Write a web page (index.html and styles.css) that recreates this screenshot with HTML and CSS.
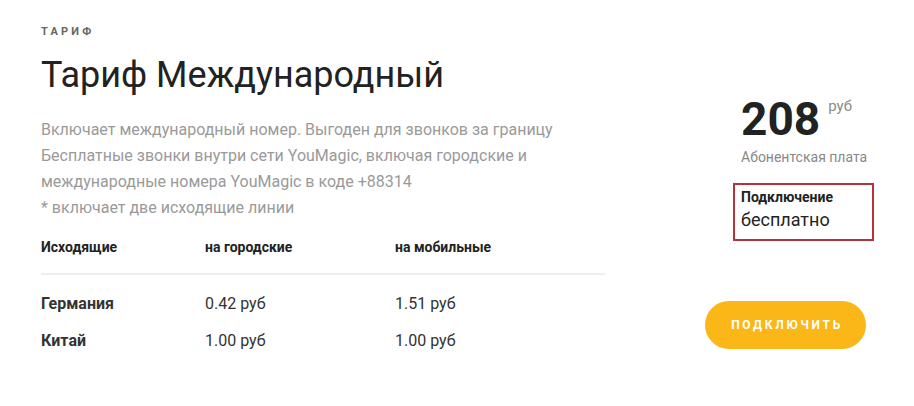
FILE: index.html
```html
<!DOCTYPE html>
<html lang="ru">
<head>
<meta charset="utf-8">
<title>Тариф Международный</title>
<link rel="stylesheet" href="styles.css">
</head>
<body>
<div class="page">
  <div class="main">
    <div class="label">ТАРИФ</div>
    <h1 class="title">Тариф Международный</h1>
    <div class="desc">
      <p>Включает международный номер. Выгоден для звонков за границу</p>
      <p>Бесплатные звонки внутри сети YouMagic, включая городские и</p>
      <p>международные номера YouMagic в коде +88314</p>
      <p>* включает две исходящие линии</p>
    </div>
    <div class="table">
      <div class="row head">
        <div class="c1">Исходящие</div>
        <div class="c2">на городские</div>
        <div class="c3">на мобильные</div>
      </div>
      <div class="body">
        <div class="row">
          <div class="c1 country">Германия</div>
          <div class="c2">0.42 руб</div>
          <div class="c3">1.51 руб</div>
        </div>
        <div class="row">
          <div class="c1 country">Китай</div>
          <div class="c2">1.00 руб</div>
          <div class="c3">1.00 руб</div>
        </div>
      </div>
    </div>
  </div>
  <div class="side">
    <div class="price">
      <span class="amount">208</span>
      <span class="cur">руб</span>
    </div>
    <div class="fee">Абонентская плата</div>
    <div class="connect">
      <div class="connect-label">Подключение</div>
      <div class="connect-value">бесплатно</div>
    </div>
    <button class="btn">ПОДКЛЮЧИТЬ</button>
  </div>
</div>
</body>
</html>
```

FILE: styles.css
```css
* { box-sizing: border-box; }
html, body { margin: 0; padding: 0; background: #fff; }
body { font-family: Roboto, "Liberation Sans", sans-serif; color: #333; }

.page {
  display: flex;
  padding: 24px 0 0 41px;
}
.main { width: 564px; }

.label {
  font-size: 11px;
  line-height: 13px;
  font-weight: 700;
  letter-spacing: 3.2px;
  color: #666;
  padding-top: 0.5px;
}
.title {
  margin: 16px 0 0;
  font-size: 36px;
  line-height: 42px;
  font-weight: 400;
  color: #222;
}
.desc { margin-top: 21.5px; color: #9a9a9a; font-size: 16px; line-height: 26px; }
.desc p { margin: 0; }

.table { margin-top: 16px; }
.row { display: flex; }
.c1 { width: 164px; }
.c2 { width: 190px; }
.c3 { flex: 1; }
.head {
  font-size: 14px;
  line-height: 20px;
  font-weight: 700;
  color: #222;
  padding-bottom: 16px;
  border-bottom: 2px solid #eeeeee;
}
.body { padding-top: 9.5px; }
.body .row { font-size: 16px; line-height: 37px; color: #333; }
.country { font-weight: 700; }

.side {
  margin-left: 100px;
  width: 175px;
  display: flex;
  flex-direction: column;
  align-items: flex-start;
}
.price {
  display: flex;
  align-items: flex-start;
  margin-left: 36px;
  margin-top: 71.5px;
}
.amount {
  font-size: 46px;
  line-height: 46px;
  font-weight: 700;
  color: #222;
}
.cur {
  font-size: 15px;
  line-height: 16px;
  color: #8a8a8a;
  margin-left: 8px;
  margin-top: 2px;
}
.fee {
  margin: 7px 0 0 36px;
  font-size: 14px;
  line-height: 16px;
  color: #888;
}
.connect {
  margin: 18.5px 0 0 28px;
  width: 141px;
  border: 2px solid #b8323c;
  padding: 3.5px 6px 7px;
}
.connect-label { font-size: 14px; line-height: 16px; font-weight: 700; color: #222; }
.connect-value { margin-top: 3.5px; font-size: 18px; line-height: 24px; color: #222; }

.btn {
  margin-top: 60px;
  width: 161px;
  height: 48px;
  border: none;
  border-radius: 24px;
  background: #fbb617;
  color: #fff;
  font-family: Roboto, "Liberation Sans", sans-serif;
  font-size: 12px;
  font-weight: 700;
  letter-spacing: 2.7px;
  padding: 0 0 0 3px;
  cursor: pointer;
}
```
